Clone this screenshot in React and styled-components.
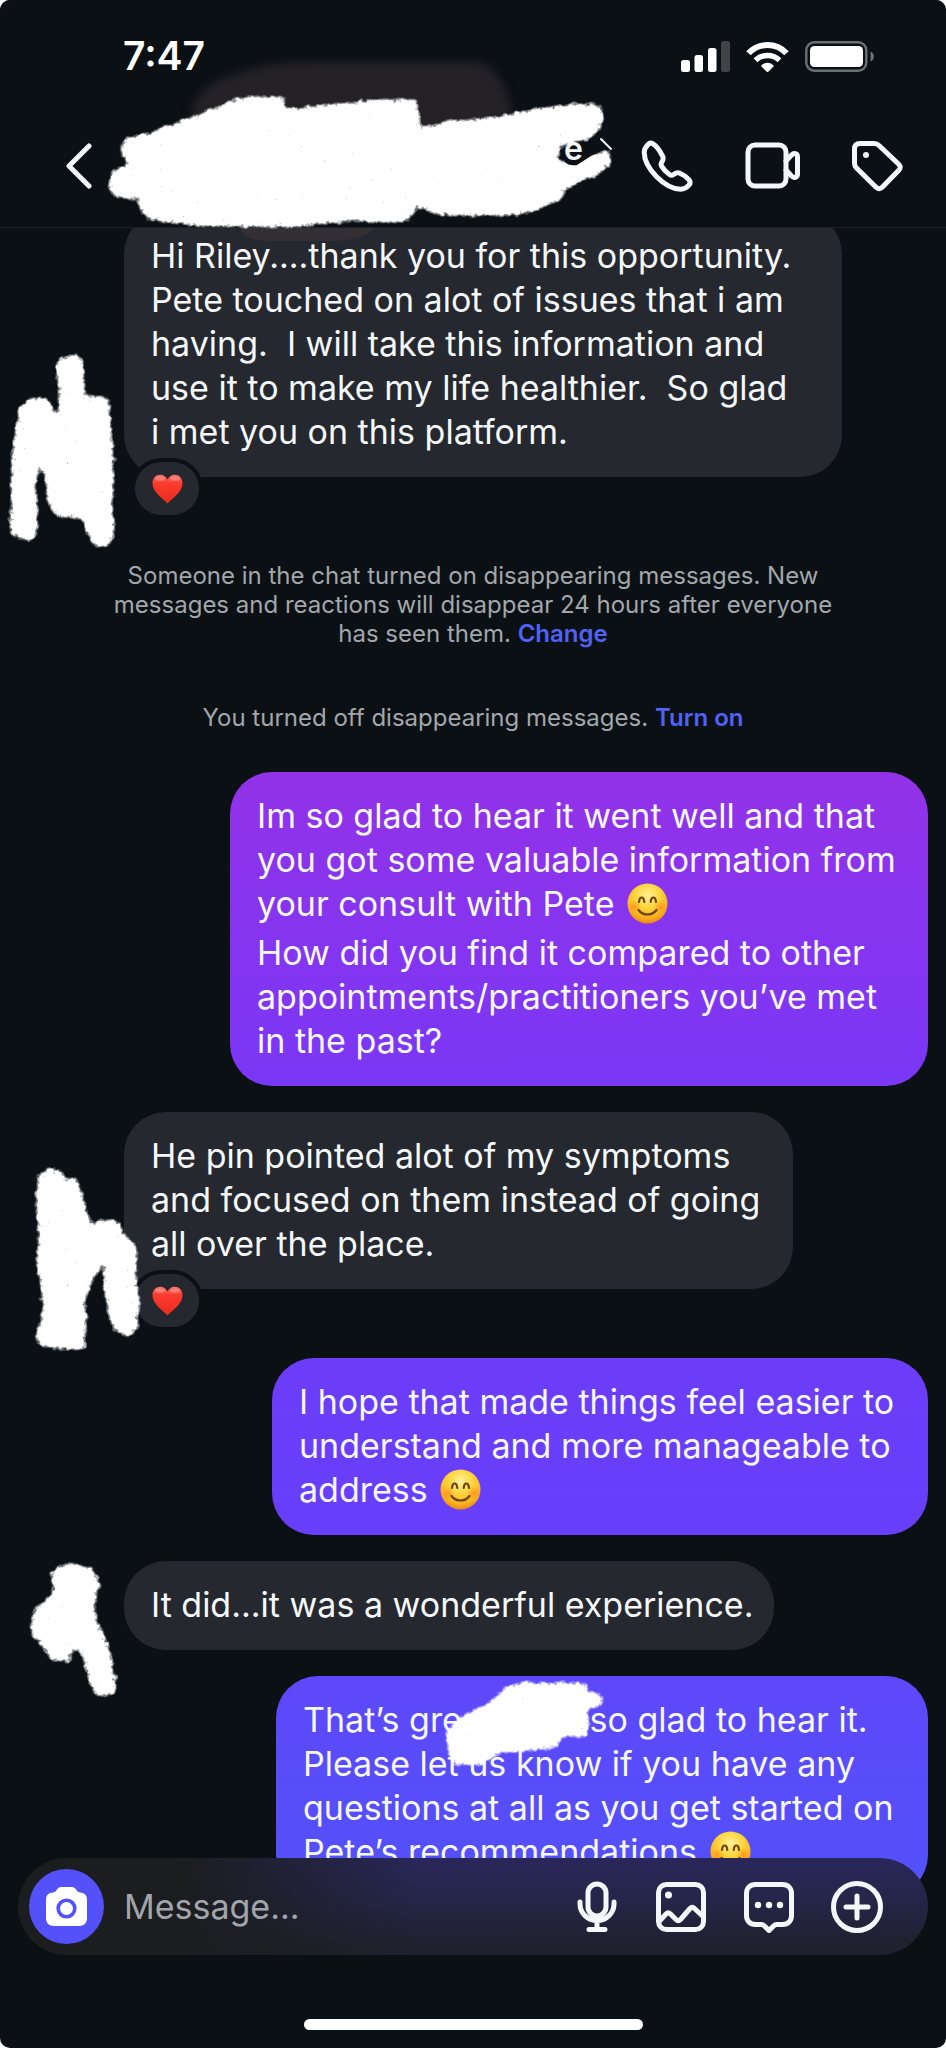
import React from "react";
import styled, { createGlobalStyle } from "styled-components";

const GlobalStyle = createGlobalStyle`
  * {
    box-sizing: border-box;
  }
  body {
    margin: 0;
    background-color: white;
    font-family: Inter, "Liberation Sans", sans-serif;
  }
  button {
    -webkit-appearance: none;
    appearance: none;
    background: none;
    border: 0;
    padding: 0;
    color: inherit;
    cursor: pointer;
    display: flex;
  }
  p {
    margin: 0;
  }
`;

const Screen = styled.div`
  background-color: #0b1014;
  color: #f5f8fa;
  min-height: 100vh;
  display: flex;
  flex-direction: column;
  border-radius: 10px;
  overflow: hidden;
`;

const Top = styled.header`
  position: relative;
  z-index: 2;
  background-color: #0b1014;
  border-bottom: 1px solid #1b2025;
`;

const Smudge = styled.div`
  position: absolute;
  left: 192px;
  top: 62px;
  width: 320px;
  height: 120px;
  border-radius: 120px 40px 0 0 / 50px 60px 0 0;
  background-color: #242227;
  filter: blur(4px);
`;

const StatusBar = styled.div`
  position: relative;
  display: flex;
  align-items: center;
  justify-content: space-between;
  height: 112px;
  padding: 0 71px 0 123px;
`;

const Clock = styled.time`
  font-size: 39px;
  line-height: 48px;
  font-weight: 600;
  color: white;
`;

const StatusIcons = styled.div`
  display: flex;
  align-items: center;
  gap: 16px;
`;

const NavBar = styled.nav`
  position: relative;
  display: flex;
  align-items: center;
  height: 115px;
  padding: 0 43px 8px 64px;
`;

const Contact = styled.div`
  position: relative;
  flex: 1;
  display: flex;
  justify-content: flex-end;
  height: 62px;
  padding-right: 28px;
`;

const ContactName = styled.h1`
  position: relative;
  z-index: 2;
  display: flex;
  align-items: center;
  gap: 16px;
  margin: 0;
  height: 28px;
  font-size: 32px;
  line-height: 28px;
  font-weight: 600;
`;

const NavActions = styled.div`
  display: flex;
  align-items: center;
  gap: 51px;
`;

const Thread = styled.main`
  display: flex;
  flex-direction: column;
  flex: 1;
  gap: 26px;
  margin-top: -16px;
  padding: 0 18px;
`;

const Row = styled.div`
  position: relative;
  display: flex;
  justify-content: ${(props) => (props.$sent ? "flex-end" : "flex-start")};
  padding-left: ${(props) => (props.$sent ? "0" : "106px")};
  margin-bottom: ${(props) => (props.$reacted ? "43px" : "0")};
`;

const Bubble = styled.div`
  position: relative;
  display: flex;
  flex-direction: column;
  gap: 5px;
  width: ${(props) => props.$width}px;
  max-width: 100%;
  padding: 22px 10px 23px 27px;
  border-radius: 42px;
  font-size: 34px;
  line-height: 44px;
  white-space: pre-wrap;
  background: ${(props) =>
    props.$sent
      ? "linear-gradient(#9d30e0 30%, #9232e8 38%, #7a37f6 53%, #6c3df9 67%, #663ffa 75%, #5e48f9 82%, #5450fa 91%) fixed"
      : "#25282e"};
`;

const Reaction = styled.span`
  position: absolute;
  left: 7px;
  bottom: -42px;
  display: flex;
  align-items: center;
  justify-content: center;
  width: 72px;
  height: 61px;
  border: 4px solid #0b1014;
  border-radius: 31px;
  background-color: #25282e;
`;

const Notices = styled.section`
  display: flex;
  flex-direction: column;
  gap: 55px;
  margin: 15px 0 14px;
  text-align: center;
`;

const Notice = styled.p`
  font-size: 24px;
  line-height: 29px;
  color: #a2a7ac;
`;

const NoticeLink = styled.a`
  font-weight: 600;
  color: #5062f5;
  text-decoration: none;
`;

const Redacted = styled.span`
  position: relative;
  display: inline-block;
  width: 118px;
  height: 24px;
`;

const Overlay = styled.svg`
  position: absolute;
  left: ${(props) => props.$left}px;
  top: ${(props) => props.$top}px;
  overflow: visible;
  pointer-events: none;
  z-index: 1;
`;

const Footer = styled.footer`
  position: relative;
  z-index: 2;
  display: flex;
  flex-direction: column;
  align-items: center;
  gap: 64px;
  margin-top: -44px;
  padding: 0 18px 18px;
`;

const Composer = styled.form`
  display: flex;
  align-items: center;
  width: 100%;
  height: 97px;
  padding: 0 45px 0 11px;
  border-radius: 49px;
  background: linear-gradient(90deg, #1b1d1f 18%, rgba(27, 29, 31, 0) 44%),
    linear-gradient(#29275a, #25264a 40%, #1f212e 90%);
`;

const CameraButton = styled.button`
  align-items: center;
  justify-content: center;
  width: 75px;
  height: 75px;
  border-radius: 50%;
  background-color: #5551fa;
`;

const MessageInput = styled.input`
  flex: 1;
  min-width: 0;
  margin-left: 20px;
  padding: 0;
  border: 0;
  outline: none;
  background: none;
  color: white;
  font-family: inherit;
  font-size: 34px;
  line-height: 44px;
  &::placeholder {
    color: #a2a5ab;
    opacity: 1;
  }
`;

const ComposerActions = styled.div`
  display: flex;
  align-items: center;
  gap: 36px;
`;

const HomeIndicator = styled.div`
  width: 339px;
  height: 11px;
  border-radius: 6px;
  background-color: white;
`;

const HiddenSvg = styled.svg`
  position: absolute;
`;

const SmileSvg = styled.svg`
  vertical-align: -8px;
  margin-left: 3px;
`;

const Icon = ({ width = 52, height = 52, stroke = 5, children }) => (
  <svg
    width={width}
    height={height}
    viewBox={`0 0 ${width} ${height}`}
    fill="none"
    stroke="currentColor"
    strokeWidth={stroke}
    strokeLinecap="round"
    strokeLinejoin="round"
    aria-hidden="true"
  >
    {children}
  </svg>
);

// chalk strokes are drawn at three times their size so the edge noise stays fine
const Scribble = ({ left, top, width, height, points }) => (
  <Overlay
    $left={left}
    $top={top}
    width={width}
    height={height}
    viewBox={`0 0 ${width * 3} ${height * 3}`}
    aria-hidden="true"
  >
    <polygon points={points} fill="white" filter="url(#chalk)" />
  </Overlay>
);

const Defs = () => (
  <HiddenSvg width="0" height="0" aria-hidden="true">
    <defs>
      <filter id="chalk" x="-10%" y="-10%" width="120%" height="120%">
        <feTurbulence
          type="fractalNoise"
          baseFrequency="0.09"
          numOctaves="3"
          seed="4"
          result="noise"
        />
        <feDisplacementMap
          in="SourceGraphic"
          in2="noise"
          scale="44"
          xChannelSelector="R"
          yChannelSelector="G"
        />
        <feGaussianBlur stdDeviation="6" result="soft" />
        <feComposite
          in="soft"
          in2="noise"
          operator="arithmetic"
          k1="2.6"
          k2="1"
          k3="0"
          k4="-0.5"
          result="grain"
        />
        <feFlood floodColor="white" />
        <feComposite in2="grain" operator="in" />
      </filter>
      <radialGradient id="face" cx="50%" cy="30%" r="70%">
        <stop offset="0" stopColor="#fff29a" />
        <stop offset="0.45" stopColor="#fdd43b" />
        <stop offset="0.8" stopColor="#f9b021" />
        <stop offset="1" stopColor="#ea8a10" />
      </radialGradient>
      <radialGradient id="blush">
        <stop offset="0" stopColor="#ff7a1a" stopOpacity="0.6" />
        <stop offset="1" stopColor="#ff8a1a" stopOpacity="0" />
      </radialGradient>
      <linearGradient id="heart" x1="0" y1="0" x2="0" y2="1">
        <stop offset="0" stopColor="#ff7368" />
        <stop offset="0.3" stopColor="#fb3b2d" />
        <stop offset="1" stopColor="#e92a1d" />
      </linearGradient>
    </defs>
  </HiddenSvg>
);

const Smile = () => (
  <SmileSvg
    width="41"
    height="41"
    viewBox="0 0 41 41"
    fill="none"
    role="img"
    aria-label="Smiling face"
  >
    <circle cx="20.5" cy="20.5" r="20" fill="url(#face)" />
    <circle cx="7.5" cy="24" r="7" fill="url(#blush)" />
    <circle cx="33.5" cy="24" r="7" fill="url(#blush)" />
    <g stroke="#6d4409" strokeWidth="2.2" strokeLinecap="round">
      <path d="M12 19c.6-6 4.700-6 5.300 0" />
      <path d="M23.700 19c.6-6 4.700-6 5.300 0" />
      <path d="M11.500 27c4.500 6 13.500 6 18 0" />
    </g>
  </SmileSvg>
);

const Heart = () => (
  <svg width="31" height="30" viewBox="0 0 31 30" role="img" aria-label="Heart">
    <path
      d="M15.500 29.500C11 24.500.5 18.500.5 9.300.5 4 4 .8 8.300.8c3 0 5.700 1.700 7.200 4.700C17 2.500 19.700.8 22.700.8 27 .8 30.500 4 30.500 9.300c0 9.200-10.500 15.200-15 20.200z"
      fill="url(#heart)"
    />
    <ellipse cx="8" cy="4.800" rx="4.500" ry="2" fill="#ff9d94" opacity="0.6" />
    <ellipse cx="23" cy="4.800" rx="4.500" ry="2" fill="#ff9d94" opacity="0.6" />
  </svg>
);

const headerScribble =
  "366,420 495,384 570,354 660,318 720,294 850,288 854,326 990,316 1110,302 1252,298 1260,385 1350,362 1420,358 1500,350 1620,325 1725,312 1794,312 1812,354 1794,396 1752,420 1684,438 1670,480 1720,492 1770,465 1828,448 1830,495 1790,525 1700,560 1680,600 1590,638 1500,648 1330,645 1254,620 1215,666 1020,664 900,680 600,678 450,660 420,624 414,594 345,594 322,549 345,510 392,492 366,465";

const avatarScribbles = {
  first:
    "175,60 210,50 245,55 252,105 255,175 300,170 325,185 332,265 340,345 338,445 340,585 325,620 285,620 260,575 245,535 200,535 160,525 138,475 140,425 115,365 108,445 112,575 95,600 50,600 32,575 35,495 35,365 50,265 60,205 90,180 145,180 165,225 178,215 172,125",
  second:
    "112,50 150,20 185,30 190,55 230,55 250,110 265,170 275,205 290,180 345,178 370,215 405,260 408,340 417,420 412,510 380,525 345,510 325,450 312,380 315,300 280,350 255,420 255,560 180,566 125,555 106,520 130,470 125,390 110,300 115,220 110,120",
  third:
    "152,45 175,25 225,22 280,35 300,80 285,120 288,200 320,250 335,320 348,380 345,412 290,415 270,380 255,320 235,275 218,280 210,315 155,308 130,270 95,230 92,212 105,160 160,105",
};

const nameScribble =
  "75,175 130,120 195,95 240,50 310,25 400,28 490,28 500,50 540,70 543,92 500,105 505,160 490,190 430,185 405,220 340,230 240,235 180,270 100,272 85,230 75,205";

const SignalIcon = () => (
  <svg width="49" height="31" viewBox="0 0 49 31" fill="white">
    <rect x="0" y="19" width="9" height="12" rx="2.500" />
    <rect x="13.500" y="14" width="8.500" height="17" rx="2.500" />
    <rect x="27" y="7" width="8.500" height="24" rx="2.500" />
    <rect x="40" y="0" width="9" height="31" rx="2.500" opacity="0.22" />
  </svg>
);

const WifiIcon = () => (
  <svg width="43" height="31" viewBox="0 0 43 31" fill="none" stroke="white">
    <path d="M2.500 12.300C13 1.300 30 1.300 40.500 12.300" strokeWidth="6" />
    <path d="M9.500 19.300C16 12.800 27 12.800 33.500 19.300" strokeWidth="5.500" />
    <path
      d="M15 25c3.500-4.500 9.500-4.500 13 0l-6.500 6.500z"
      fill="white"
      stroke="none"
    />
  </svg>
);

const BatteryIcon = () => (
  <svg width="70" height="31" viewBox="0 0 70 31" fill="none">
    <rect
      x="1.300"
      y="1.300"
      width="60"
      height="28.400"
      rx="8"
      stroke="#6b7073"
      strokeWidth="2.400"
    />
    <rect x="5" y="5" width="53" height="21" rx="4.500" fill="white" />
    <path d="M65.500 10.500c4.500 1.500 4.500 8.500 0 10z" fill="#6b7073" />
  </svg>
);

const App = () => {
  return (
    <>
      <GlobalStyle />
      <Defs />
      <Screen>
        <Top>
          <Smudge />
          <StatusBar>
            <Clock>7:47</Clock>
            <StatusIcons>
              <SignalIcon />
              <WifiIcon />
              <BatteryIcon />
            </StatusIcons>
          </StatusBar>
          <Scribble
            left={0}
            top={0}
            width={620}
            height={230}
            points={headerScribble}
          />
          <NavBar>
            <button type="button" aria-label="Back">
              <Icon width={30} height={46}>
                <path d="M25 3L5 23l20 20" />
              </Icon>
            </button>
            <Contact>
              <Overlay $left={460} $top={2} width="60" height="44">
                <path
                  d="M9 19q1 11 14 9l14-9 17-8 2-5-6-7-12 5-10 3-10 1z"
                  fill="#0b1014"
                />
              </Overlay>
              <ContactName>
                e
                <Icon width={14} height={24} stroke={2}>
                  <path d="M2 2l10 10" />
                </Icon>
              </ContactName>
            </Contact>
            <NavActions>
              <button type="button" aria-label="Voice call">
                <Icon>
                  <path d="M11.500 3.500c-1.700-.8-3.300-.3-4.700 1.200C4.300 7.400 3.200 9.200 3.200 12.200c0 16 21 37 36.500 37 3.500 0 5.800-1.200 8.300-4.200 1.500-1.800 1.300-3.800-.3-5.500-2.700-2.800-6-5.200-9.300-6.500-2.300-.8-4 .2-6.200 1.700-1.200.8-2.500.6-3.700-.2-3.300-2.300-6.300-5.500-8-8.500-.7-1.300-.6-2.400.2-3.700 1.300-2 2-3.700 1-6C20 13 15.500 5.500 11.500 3.500z" />
                </Icon>
              </button>
              <button type="button" aria-label="Video call">
                <Icon width={56}>
                  <rect x="4" y="5" width="38" height="41" rx="7" />
                  <path d="M42 21l5.500-6c2.500-2.500 6-1.500 6 2v17c0 3.500-3.500 4.500-6 2L42 30" />
                </Icon>
              </button>
              <button type="button" aria-label="Label">
                <Icon>
                  <path d="M9 3.500h14c2 0 3.500.5 5 2L47.500 24c2.300 2.200 2.300 4.300 0 6.500L31.500 47c-2.300 2.300-4.500 2.300-6.700 0L5.500 28c-1.500-1.500-2-3-2-5V9c0-3.500 2-5.500 5.500-5.500z" />
                  <circle
                    cx="15"
                    cy="15"
                    r="3"
                    fill="currentColor"
                    stroke="none"
                  />
                </Icon>
              </button>
            </NavActions>
          </NavBar>
        </Top>

        <Thread>
          <Row $reacted>
            <Scribble
              left={-18}
              top={127}
              width={120}
              height={210}
              points={avatarScribbles.first}
            />
            <Bubble $width={718}>
              <Overlay $left={116} $top={14} width="136" height="16">
                <path d="M0 0h136q-8 13-40 15H30Q2 15 0 0z" fill="#332f35" />
              </Overlay>
              <p>
                {
                  "Hi Riley....thank you for this opportunity.\nPete touched on alot of issues that i am\nhaving.  I will take this information and\nuse it to make my life healthier.  So glad\ni met you on this platform."
                }
              </p>
              <Reaction>
                <Heart />
              </Reaction>
            </Bubble>
          </Row>

          <Notices>
            <Notice>
              Someone in the chat turned on disappearing messages. New
              <br />
              messages and reactions will disappear 24 hours after everyone
              <br />
              has seen them. <NoticeLink href="#change">Change</NoticeLink>
            </Notice>
            <Notice>
              You turned off disappearing messages.{" "}
              <NoticeLink href="#turn-on">Turn on</NoticeLink>
            </Notice>
          </Notices>

          <Row $sent>
            <Bubble $sent $width={698}>
              <p>
                {
                  "Im so glad to hear it went well and that\nyou got some valuable information from\nyour consult with Pete "
                }
                <Smile />
              </p>
              <p>
                {
                  "How did you find it compared to other\nappointments/practitioners you’ve met\nin the past?"
                }
              </p>
            </Bubble>
          </Row>

          <Row $reacted>
            <Bubble $width={669}>
              <p>
                {
                  "He pin pointed alot of my symptoms\nand focused on them instead of going\nall over the place."
                }
              </p>
              <Reaction>
                <Heart />
              </Reaction>
            </Bubble>
            <Scribble
              left={-18}
              top={49}
              width={145}
              height={200}
              points={avatarScribbles.second}
            />
          </Row>

          <Row $sent>
            <Bubble $sent $width={656}>
              <p>
                {
                  "I hope that made things feel easier to\nunderstand and more manageable to\naddress "
                }
                <Smile />
              </p>
            </Bubble>
          </Row>

          <Row>
            <Scribble
              left={-18}
              top={-4}
              width={120}
              height={145}
              points={avatarScribbles.third}
            />
            <Bubble $width={650}>
              <p>It did...it was a wonderful experience.</p>
            </Bubble>
          </Row>

          <Row $sent>
            <Bubble $sent $width={652}>
              <p>
                That’s gre
                <Redacted>
                  <Scribble
                    left={-41}
                    top={-34}
                    width={190}
                    height={100}
                    points={nameScribble}
                  />
                </Redacted>
                {" so glad to hear it."}
                <br />
                {
                  "Please let us know if you have any\nquestions at all as you get started on\nPete’s recommendations "
                }
                <Smile />
              </p>
            </Bubble>
          </Row>
        </Thread>

        <Footer>
          <Composer onSubmit={(e) => e.preventDefault()}>
            <CameraButton type="button" aria-label="Camera">
              <svg width="41" height="39" viewBox="0 0 41 39" fill="white">
                <path d="M15 0h11c4 0 4 5 8 5.500 4.500 0 7 3 7 7V31c0 5-3 8-8 8H8c-5 0-8-3-8-8V12.500c0-4 2.500-7 7-7C11 5 11 0 15 0z" />
                <circle
                  cx="20.500"
                  cy="21.500"
                  r="8.300"
                  fill="none"
                  stroke="#5551fa"
                  strokeWidth="3.600"
                />
              </svg>
            </CameraButton>
            <MessageInput
              type="text"
              aria-label="Message"
              placeholder="Message..."
            />
            <ComposerActions>
              <button type="button" aria-label="Voice message">
                <Icon width={44}>
                  <rect x="13" y="3" width="18" height="32" rx="9" />
                  <path d="M5 21v2c0 9 7.500 16.500 17 16.500S39 32 39 23v-2M22 40v8M14 48.500h16" />
                </Icon>
              </button>
              <button type="button" aria-label="Photo">
                <Icon>
                  <rect x="3.500" y="3.500" width="45" height="45" rx="8" />
                  <path d="M5 39.500l6-6.500c1.500-1.500 3-1.500 4.500 0l5.500 5.500c1.500 1.500 3 1.500 4.500 0L35 27.500c1.500-1.500 3-1.500 4.500 0l8 7.500" />
                  <circle
                    cx="13.500"
                    cy="14"
                    r="3.500"
                    fill="currentColor"
                    stroke="none"
                  />
                </Icon>
              </button>
              <button type="button" aria-label="Quick reply">
                <Icon>
                  <path d="M12.500 3.500h27c5.500 0 9 3.500 9 9v22c0 5.500-3.500 9-9 9h-6c-1.500 0-2 .5-3 1.500L26 49.500 21.500 45c-1-1-1.500-1.500-3-1.500h-6c-5.500 0-9-3.500-9-9v-22c0-5.500 3.500-9 9-9z" />
                  <g fill="currentColor" stroke="none">
                    <circle cx="15" cy="24" r="3.200" />
                    <circle cx="26" cy="24" r="3.200" />
                    <circle cx="37" cy="24" r="3.200" />
                  </g>
                </Icon>
              </button>
              <button type="button" aria-label="More">
                <Icon>
                  <circle cx="26" cy="26" r="23.500" />
                  <path d="M26 15v22M15 26h22" />
                </Icon>
              </button>
            </ComposerActions>
          </Composer>
          <HomeIndicator />
        </Footer>
      </Screen>
    </>
  );
};

export default App;
